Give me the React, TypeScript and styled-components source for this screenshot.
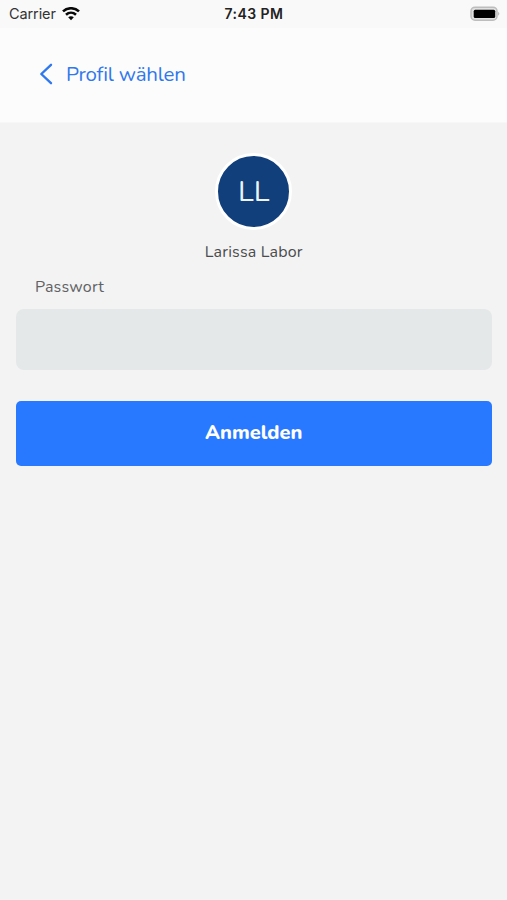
import React from 'react';
import styled, { createGlobalStyle } from 'styled-components';

const GlobalStyle = createGlobalStyle`
  * { box-sizing: border-box; }
  body { margin: 0; background: #f3f3f3; }
  button, input { font: inherit; border: 0; margin: 0; }
`;

const Screen = styled.main`
  display: flex;
  flex-direction: column;
  min-height: 900px;
  background: #f3f3f3;
  color: #4a4c4e;
  font-family: Nunito, Lato, sans-serif;
`;

const StatusBar = styled.div`
  display: grid;
  grid-template-columns: 1fr auto 1fr;
  align-items: center;
  height: 28px;
  padding: 0 7px 0 9px;
  background: #f9f9f9;
  color: #222;
  font: 400 14.5px/28px Inter, sans-serif;
`;

const Carrier = styled.div`
  display: flex;
  align-items: center;
  gap: 6px;
  letter-spacing: -0.1px;
  color: #333;
`;

const Clock = styled.div`
  font-size: 14px;
  font-weight: 600;
  letter-spacing: 0.45px;
  margin-right: 1px;
`;

const Battery = styled.svg`
  justify-self: end;
`;

const Header = styled.header`
  display: flex;
  align-items: center;
  height: 95px;
  padding: 0 39px 3px;
  background: #fcfcfc;
  border-bottom: 1px solid #f7f7f7;
`;

const BackButton = styled.button`
  display: flex;
  align-items: center;
  gap: 13px;
  padding: 0;
  background: none;
  color: #3078ed;
  font-size: 20.5px;
  line-height: 28px;
  letter-spacing: -0.22px;
`;

const Content = styled.div`
  display: flex;
  flex-direction: column;
  padding: 30px 15px 0 15.5px;
`;

const Profile = styled.section`
  display: flex;
  flex-direction: column;
  align-items: center;
`;

const Avatar = styled.div`
  display: flex;
  align-items: center;
  justify-content: center;
  width: 77px;
  height: 77px;
  border: 3px solid #fff;
  border-radius: 50%;
  background: #103f7b;
  color: #edf3f9;
  font-size: 29px;
  line-height: 1;
  padding-bottom: 1px;
`;

const Name = styled.div`
  margin-top: 10px;
  font-size: 16px;
  line-height: 24px;
  letter-spacing: 0.18px;
`;

const Label = styled.label`
  margin: 11px 0 10px 19.5px;
  color: #606264;
  font-size: 16px;
  line-height: 24px;
  letter-spacing: 0.2px;
`;

const Password = styled.input`
  width: 100%;
  height: 61px;
  padding: 0 19px;
  border-radius: 8px;
  background: #e4e8e9;
  outline: none;
`;

const Submit = styled.button`
  width: 100%;
  height: 65px;
  margin-top: 31px;
  padding: 0 0 2px;
  border-radius: 5px;
  background: #2879ff;
  color: #fff;
  font-size: 20px;
  font-weight: 800;
`;

export default function App() {
  return (
    <Screen>
      <GlobalStyle />
      <StatusBar>
        <Carrier>
          Carrier
          <svg width="18" height="14" viewBox="0 0 18 14" fill="none" stroke="#080808" strokeWidth="2.6">
            <path d="M1 4.4C5.5.2 12.5.2 17 4.4" />
            <path d="M4 7.7C6.9 5.1 11.1 5.1 14 7.7" />
            <path d="M6.2 10.2C7.7 8.8 10.3 8.8 11.8 10.2L9 13.2Z" fill="#080808" stroke="none" />
          </svg>
        </Carrier>
        <Clock>7:43 PM</Clock>
        <Battery width="30" height="16" viewBox="0 0 30 16">
          <rect x="1" y="1.2" width="26" height="13" rx="4" fill="#e0e0e0" stroke="#bdbdbd" strokeWidth="1.5" />
          <rect x="3.7" y="3.8" width="21.5" height="8.3" rx="1.5" fill="#000" />
          <path d="M28.3 5.7Q30.2 7.7 28.3 9.7Z" fill="#a5a5a5" />
        </Battery>
      </StatusBar>
      <Header>
        <BackButton type="button">
          <svg width="14" height="22" viewBox="0 0 14 22" fill="none" stroke="currentColor" strokeWidth="2.4" strokeLinecap="round" strokeLinejoin="round">
            <path d="M12 1.8L2.3 11L12 20.2" />
          </svg>
          Profil wählen
        </BackButton>
      </Header>
      <Content>
        <Profile>
          <Avatar>LL</Avatar>
          <Name>Larissa Labor</Name>
        </Profile>
        <Label htmlFor="password">Passwort</Label>
        <Password id="password" type="password" />
        <Submit type="button">Anmelden</Submit>
      </Content>
    </Screen>
  );
}
